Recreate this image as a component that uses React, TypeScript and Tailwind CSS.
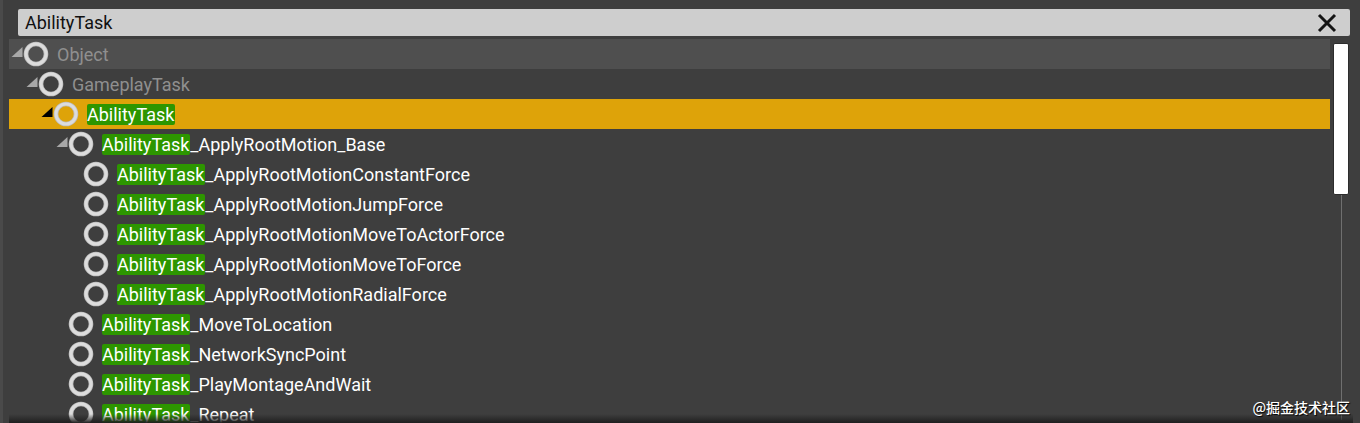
const MATCH = "AbilityTask";

type Row = { suffix: string; depth: number; arrow?: boolean; dim?: boolean; selected?: boolean; striped?: boolean; plain?: string };

const rows: Row[] = [
  { plain: "Object", suffix: "", depth: 0, arrow: true, dim: true, striped: true },
  { plain: "GameplayTask", suffix: "", depth: 1, arrow: true, dim: true },
  { suffix: "", depth: 2, arrow: true, selected: true },
  { suffix: "_ApplyRootMotion_Base", depth: 3, arrow: true },
  { suffix: "_ApplyRootMotionConstantForce", depth: 4 },
  { suffix: "_ApplyRootMotionJumpForce", depth: 4 },
  { suffix: "_ApplyRootMotionMoveToActorForce", depth: 4 },
  { suffix: "_ApplyRootMotionMoveToForce", depth: 4 },
  { suffix: "_ApplyRootMotionRadialForce", depth: 4 },
  { suffix: "_MoveToLocation", depth: 3 },
  { suffix: "_NetworkSyncPoint", depth: 3 },
  { suffix: "_PlayMontageAndWait", depth: 3 },
  { suffix: "_Repeat", depth: 3 },
];

function ClassIcon() {
  return (
    <svg width="26" height="26" viewBox="0 0 26 26" className="shrink-0">
      <circle cx="13" cy="13" r="10" fill="none" stroke="#bdbdbd" strokeWidth="4.6" />
      <circle cx="13" cy="13" r="10" fill="none" stroke="#dcdcdc" strokeWidth="3" />
    </svg>
  );
}

function Arrow({ color }: { color: string }) {
  return (
    <svg width="12" height="12" viewBox="0 0 12 12" className="shrink-0">
      <path d="M0.5 11 L11.5 11 L11.5 1 Z" fill={color} />
    </svg>
  );
}

function TreeRow({ row }: { row: Row }) {
  const bg = row.selected ? "bg-[#dea309]" : row.striped ? "bg-[#4f4f4f]" : "";
  return (
    <div className={`flex h-[30px] items-center ${bg}`}>
      {Array.from({ length: row.depth }).map((_, i) => (
        <span key={i} className="w-[15px] shrink-0" />
      ))}
      <span className="flex h-[12px] w-[14px] shrink-0 items-center justify-end -translate-y-[2px]">
        {row.arrow && <Arrow color={row.selected ? "#000000" : "#a8a8a8"} />}
      </span>
      <ClassIcon />
      <span className={`ml-[8px] whitespace-nowrap text-[18px] leading-[21px] ${row.dim ? "text-[#8f8f8f]" : "text-white"}`}>
        {row.plain ?? (
          <>
            <span className="inline-block rounded-[2px] bg-[#2d9600] pr-px">{MATCH}</span>
            {row.suffix}
          </>
        )}
      </span>
    </div>
  );
}

export default function App() {
  return (
    <div className="relative h-[423px] w-[1360px] overflow-hidden bg-[#3e3e3e] font-['Roboto',sans-serif]">
      <div className="flex h-[423px] flex-col pt-[9px] pr-[10px] pl-[18px]">
        <div className="flex h-[27px] shrink-0 items-center justify-between rounded-[2px] bg-[#cecece] pr-[13px] pl-[7px] text-[18px] text-[#111111]">
          <span>AbilityTask</span>
          <svg width="20" height="20" viewBox="0 0 20 20">
            <path d="M2 2 L18 18 M18 2 L2 18" stroke="#141414" strokeWidth="3" />
          </svg>
        </div>
        <div className="-ml-[9px] mt-[3px] flex min-h-0 flex-1">
          <div className="w-[1321px] shrink-0">
            {rows.map((row, i) => (
              <TreeRow key={i} row={row} />
            ))}
          </div>
          <div className="ml-[3px] flex w-[16px] shrink-0 flex-col items-center pt-[4px]">
            <div className="h-[152px] w-[16px] shrink-0 rounded-[2px] border border-[#2c2c2c] bg-white" />
            <div className="h-[225px] w-px bg-[#6f6f6f]" />
          </div>
        </div>
      </div>
      <div className="absolute inset-y-0 left-0 w-[3px] bg-[#4a4a4a]" />
      <div className="absolute bottom-0 left-[9px] right-[7px] h-[9px] bg-gradient-to-b from-transparent to-[#1f1f1f]" />
      <div className="absolute right-[10px] bottom-[6px] font-['Noto_Sans_CJK_SC',sans-serif] text-[14px] font-medium leading-[20px] text-white [text-shadow:1px_1px_1px_#000]">
        @掘金技术社区
      </div>
    </div>
  );
}
